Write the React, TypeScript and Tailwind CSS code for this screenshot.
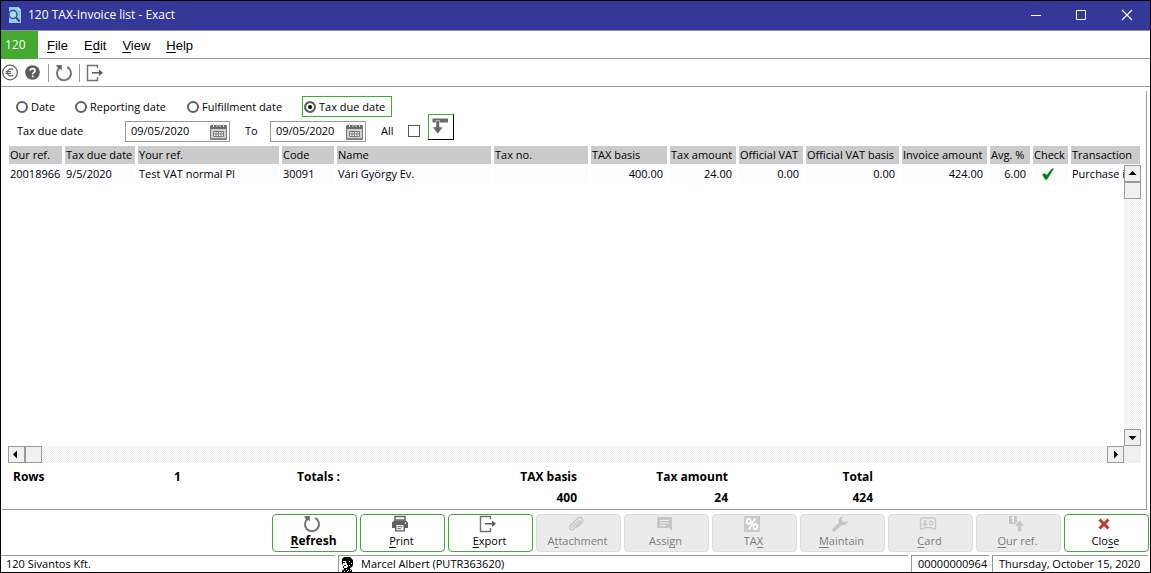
import type { ReactNode } from 'react';

interface Column {
  label: string;
  value: string;
  width: string;
  right?: boolean;
}

const COLUMNS: Column[] = [
  { label: 'Our ref.', value: '20018966', width: 'w-[56px]' },
  { label: 'Tax due date', value: '9/5/2020', width: 'w-[73px]' },
  { label: 'Your ref.', value: 'Test VAT normal PI', width: 'w-[144px]' },
  { label: 'Code', value: '30091', width: 'w-[55px]' },
  { label: 'Name', value: 'Vári György Ev.', width: '' },
  { label: 'Tax no.', value: '', width: 'w-[97px]' },
  { label: 'TAX basis', value: '400.00', width: 'w-[79px]', right: true },
  { label: 'Tax amount', value: '24.00', width: 'w-[69px]', right: true },
  { label: 'Official VAT', value: '0.00', width: 'w-[67px]', right: true },
  { label: 'Official VAT basis', value: '0.00', width: 'w-[96px]', right: true },
  { label: 'Invoice amount', value: '424.00', width: 'w-[88px]', right: true },
  { label: 'Avg. %', value: '6.00', width: 'w-[43px]', right: true },
  { label: 'Check', value: 'check', width: 'w-[38px]' },
  { label: 'Transaction', value: 'Purchase i', width: 'w-[72px]' },
];

const RADIOS = [
  { label: 'Date', box: 'w-[59px]' },
  { label: 'Reporting date', box: 'w-[112px]' },
  { label: 'Fulfillment date', box: 'w-[117px]' },
  { label: 'Tax due date', box: 'w-[90px]', checked: true },
];

function RefreshIcon() {
  return (
    <svg width="18" height="18" viewBox="0 0 18 18" aria-hidden="true">
      <path d="M12.2 3A7 7 0 1 1 4.8 3.6" fill="none" stroke="#757575" strokeWidth="2" />
      <path d="M1 1.2 6.8 1v5.6L4.8 4.6 3 4.2Z" fill="#666" />
    </svg>
  );
}

function ExportIcon() {
  return (
    <svg width="18" height="18" viewBox="0 0 18 18" aria-hidden="true">
      <path d="M11.5 4V1.5h-10v15h10V13" fill="none" stroke="#707070" strokeWidth="1.4" />
      <path d="M6 8h7V5.5L17 8.7 13 12V9.4H6Z" fill="#5c5c5c" />
    </svg>
  );
}

function PrintIcon() {
  return (
    <svg width="18" height="18" viewBox="0 0 18 18" aria-hidden="true">
      <path d="M4 1.5h10V5H4Z" fill="#fff" stroke="#666" strokeWidth="1.5" />
      <path d="M3 5.5h12l2 2V13h-3v3.5H4V13H1V7.5Z" fill="#616161" />
      <path d="M5.5 10h7v5.2h-7Z" fill="#fff" />
      <path d="M6.5 11.7h5M6.5 13.6h3.5" stroke="#616161" />
      <circle cx="14.5" cy="8" r="0.8" fill="#fff" />
    </svg>
  );
}

function ClipIcon() {
  return (
    <svg width="18" height="18" viewBox="0 0 18 18" fill="none" stroke="#c6c6c6" strokeWidth="1.4" aria-hidden="true">
      <path d="m4.8 12.6 6.4-6.4c1.4-1.4 3 .2 1.7 1.6l-6 6c-2.6 2.6-6-.6-3.4-3.3l6.7-6.7c3.6-3.5 7.8.5 4.3 4.1l-5.2 5.2" />
    </svg>
  );
}

function NoteIcon() {
  return (
    <svg width="18" height="18" viewBox="0 0 18 18" aria-hidden="true">
      <path d="M3.5 2h12A1.5 1.5 0 0 1 17 3.5V16l-3-3H3.5A1.5 1.5 0 0 1 2 11.5v-8A1.5 1.5 0 0 1 3.5 2Z" fill="#c6c6c6" />
      <path d="M5 5.5h9M5 8h9M5 10.5h6" stroke="#ebebeb" />
    </svg>
  );
}

function PercentIcon() {
  return (
    <svg width="18" height="18" viewBox="0 0 18 18" aria-hidden="true">
      <rect x="1" y="1" width="16" height="16" rx="1" fill="#c8c8c8" />
      <g fill="none" stroke="#fff" strokeWidth="1.9">
        <ellipse cx="5.7" cy="6.3" rx="2" ry="2.6" />
        <ellipse cx="12.4" cy="11.7" rx="2" ry="2.6" />
        <path d="m12.2 3.2-6.4 11.6" />
      </g>
    </svg>
  );
}

function WrenchIcon() {
  return (
    <svg width="18" height="18" viewBox="0 0 18 18" aria-hidden="true">
      <path
        d="M12 1.2a5 5 0 0 0-4.3 6.5l-6 6a1.7 1.7 0 0 0 2.6 2.6l6-6a5 5 0 0 0 6.5-4.8l-2.6 1.7-2.9-.6-.7-2.6Z"
        fill="#c6c6c6"
      />
    </svg>
  );
}

function CardIcon() {
  return (
    <svg width="18" height="18" viewBox="0 0 18 18" aria-hidden="true">
      <path d="M3 3h12a1.5 1.5 0 0 1 1.500 1.500v9.500h-3l-1-1.500h-7L4.500 14h-3V4.500A1.500 1.500 0 0 1 3 3Z" fill="none" stroke="#c8c8c8" strokeWidth="1.300" />
      <circle cx="6" cy="6.500" r="1.400" fill="#c8c8c8" />
      <path d="M3.500 10.500c0-3.200 5-3.200 5 0Z" fill="#c8c8c8" />
      <circle cx="12" cy="8" r="1.800" fill="none" stroke="#c8c8c8" strokeWidth="1.300" />
    </svg>
  );
}

function RefIcon() {
  return (
    <svg width="18" height="18" viewBox="0 0 18 18" aria-hidden="true">
      <path d="M2 1h8v6L8 9H2Z" fill="#c6c6c6" />
      <path d="m4.700 3.300 1.500-1v5.200" fill="none" stroke="#fff" strokeWidth="1.300" />
      <path d="m12.500 5 5 6h-3v5.500h-4V11h-3Z" fill="#c6c6c6" stroke="#ebebeb" strokeWidth="0.600" />
    </svg>
  );
}

function CloseIcon() {
  return (
    <svg width="18" height="18" viewBox="0 0 18 18" aria-hidden="true">
      <path d="m4.500 4.500 9 9m0-9-9 9" stroke="#c0392b" strokeWidth="3" />
    </svg>
  );
}

function PersonIcon() {
  return (
    <svg width="14" height="16" viewBox="0 0 14 16" aria-hidden="true">
      <path d="M2 3 4 1h6l3 3v5l-1 2-2 1v1l2 1v2H2v-1l2-2v-1H3V9L2 8Z" fill="#000" />
      <path d="M3 5h3v2h1v2h1v2H7v1H4v-2H3Z" fill="#fff" />
      <path d="M3 6h2v1H3zM4 9h2v1H4z" fill="#000" />
      <path d="M9 5h1v1H9zM11 7h1v1h-1zM9 9h1v1H9zM6 13h1v1H6zM8 14h1v1H8zM10 14h1v1h-1zM4 15h1v1H4zM7 15h1v1H7z" fill="#fff" />
    </svg>
  );
}

function CalendarIcon() {
  return (
    <svg width="17" height="17" viewBox="0 0 17 17" aria-hidden="true">
      <path d="M.5 2.500h16v14H.5Z" fill="#d2d2d2" stroke="#777" />
      <path d="M1 2h15v4H1Z" fill="#6b6b6b" />
      <path d="M3.500 0v4M7 0v4M10 0v4M13.500 0v4" stroke="#dedede" strokeWidth="1" />
      <path d="M3.500 8.500h10v5h-10ZM3.500 11h10M6 8.500v5M8.500 8.500v5M11 8.500v5" fill="#fff" stroke="#7b7b7b" />
      <path d="M1 15.500h15" stroke="#8b8b8b" />
    </svg>
  );
}

interface Action {
  before?: string;
  key: string;
  after: string;
  icon: ReactNode;
  disabled?: boolean;
  bold?: boolean;
}

const ACTIONS: Action[] = [
  { key: 'R', after: 'efresh', icon: <RefreshIcon />, bold: true },
  { key: 'P', after: 'rint', icon: <PrintIcon /> },
  { key: 'E', after: 'xport', icon: <ExportIcon /> },
  { before: 'A', key: 't', after: 'tachment', icon: <ClipIcon />, disabled: true },
  { before: 'Assi', key: 'g', after: 'n', icon: <NoteIcon />, disabled: true },
  { before: 'TA', key: 'X', after: '', icon: <PercentIcon />, disabled: true },
  { key: 'M', after: 'aintain', icon: <WrenchIcon />, disabled: true },
  { key: 'C', after: 'ard', icon: <CardIcon />, disabled: true },
  { key: 'O', after: 'ur ref.', icon: <RefIcon />, disabled: true },
  { before: 'Clo', key: 's', after: 'e', icon: <CloseIcon /> },
];

function ActionButton({ action }: { action: Action }) {
  const tone = action.disabled ? 'border-[#dcdcdc] bg-[#ebebeb] text-[#7c7c7c]' : 'border-[#43a936] bg-white text-black';
  return (
    <button
      type="button"
      disabled={action.disabled}
      className={`flex h-[38px] w-[85px] shrink-0 flex-col items-center rounded border pr-0.5 ${tone} ${action.bold ? 'text-[12px] font-bold' : ''}`}
    >
      <span className="-ml-1">{action.icon}</span>
      <span className="leading-4">
        {action.before}
        <u className="underline-offset-2">{action.key}</u>
        {action.after}
      </span>
    </button>
  );
}

function DateField({ label, width }: { label: string; width: string }) {
  return (
    <div className={`flex h-[21px] items-center border border-[#9a9a9a] bg-white pr-0.5 pl-[5px] ${width}`}>
      <input aria-label={label} type="text" defaultValue="09/05/2020" className="min-w-0 flex-1 outline-none" />
      <button type="button" aria-label={`Pick ${label}`}>
        <CalendarIcon />
      </button>
    </div>
  );
}

function ScrollButton({ points, label }: { points: string; label: string }) {
  return (
    <button type="button" aria-label={label} className="flex size-[17px] shrink-0 items-center justify-center border border-[#9a9a9a] bg-[#f0f0f0]">
      <svg width="9" height="9" viewBox="0 0 9 9" aria-hidden="true">
        <polygon points={points} fill="#000" />
      </svg>
    </button>
  );
}

export default function App() {
  return (
    <div className="flex min-h-screen flex-col border border-black bg-white font-['Open_Sans',sans-serif] text-[11px] leading-4 text-black">
      {/* title bar */}
      <header className="flex h-[30px] shrink-0 items-center border-b border-[#8f8f8f] bg-[#353799] pb-0.5 text-white">
        <svg className="ml-1.5" width="16" height="18" viewBox="0 0 16 18" aria-hidden="true">
          <path d="M2 1h9l3 3v13H2Z" fill="#8fcbf5" />
          <path d="m11 1 3 3h-3Z" fill="#d6efff" />
          <circle cx="6" cy="8.500" r="4" fill="#a9dafa" stroke="#3d5573" strokeWidth="1.500" />
          <path d="m9 11.500 3.500 4" stroke="#3d5573" strokeWidth="2" />
        </svg>
        <h1 className="ml-[5px] flex-1 text-[12px]">120 TAX-Invoice list - Exact</h1>
        <button type="button" aria-label="Minimize" className="flex w-[46px] justify-center">
          <svg width="12" height="12" viewBox="0 0 12 12"><path d="M1 6.500h10" stroke="#fff" /></svg>
        </button>
        <button type="button" aria-label="Maximize" className="flex w-11 justify-center">
          <svg width="12" height="12" viewBox="0 0 12 12"><path d="M1.500 1.500h9v9h-9Z" fill="none" stroke="#fff" /></svg>
        </button>
        <button type="button" aria-label="Close window" className="flex w-[47px] justify-center">
          <svg width="12" height="12" viewBox="0 0 12 12"><path d="m1 1 10 10m0-10L1 11" stroke="#fff" strokeWidth="1.200" /></svg>
        </button>
      </header>

      {/* menu */}
      <nav className="flex h-7 shrink-0">
        <span className="flex w-[37px] items-center bg-[#43a92f] pl-1 text-[12px] text-white">120</span>
        <div className="ml-px flex flex-1 items-center gap-4 border-b border-[#9a9a9a] pt-0.5 pl-2 font-['Liberation_Sans',sans-serif] text-[13px]">
          <button type="button"><u className="underline-offset-2">F</u>ile</button>
          <button type="button">E<u className="underline-offset-2">d</u>it</button>
          <button type="button"><u className="underline-offset-2">V</u>iew</button>
          <button type="button"><u className="underline-offset-2">H</u>elp</button>
        </div>
      </nav>

      {/* toolbar */}
      <div className="flex h-7 shrink-0 items-center border-b border-[#9a9a9a]">
        <button type="button" aria-label="Currency">
          <svg width="17" height="17" viewBox="0 0 17 17" aria-hidden="true">
            <circle cx="9" cy="8.500" r="7.300" fill="none" stroke="#666" strokeWidth="1.300" />
            <path d="M12 5.800a3.500 3.500 0 1 0 0 5.400M4.500 7.700H10M4.500 9.500H10" fill="none" stroke="#666" strokeWidth="1.200" />
          </svg>
        </button>
        <button type="button" aria-label="Help" className="ml-[7px]">
          <svg width="15" height="15" viewBox="0 0 15 15" aria-hidden="true">
            <circle cx="7.500" cy="7.500" r="7.300" fill="#5c5c5c" />
            <path d="M5.200 5.800c0-3 4.800-3 4.800 0 0 1.700-2.300 1.600-2.300 3.500M7.700 10.500v1.800" fill="none" stroke="#fff" strokeWidth="1.700" />
          </svg>
        </button>
        <span className="ml-2 h-[18px] w-px bg-[#9a9a9a]" />
        <button type="button" aria-label="Refresh list" className="ml-1.5"><RefreshIcon /></button>
        <span className="ml-1.5 h-[18px] w-px bg-[#9a9a9a]" />
        <button type="button" aria-label="Export list" className="ml-1.5"><ExportIcon /></button>
      </div>

      <main className="mt-1 mr-[3px] ml-px flex flex-1 flex-col border-r border-b border-[#9a9a9a]">
        <form className="pt-[5px] pb-px pl-3">
          <div className="flex">
            {RADIOS.map((r) => (
              <label
                key={r.label}
                className={`flex h-[21px] shrink-0 items-center gap-[3px] border pl-px whitespace-nowrap ${r.box} ${r.checked ? 'border-[#43a936]' : 'border-transparent'}`}
              >
                <input
                  type="radio"
                  name="basis"
                  defaultChecked={r.checked}
                  className="size-3 shrink-0 appearance-none rounded-full border-2 border-[#606060] checked:bg-black checked:shadow-[inset_0_0_0_2px_#fff]"
                />
                {r.label}
              </label>
            ))}
          </div>
          <div className="flex h-7 items-center">
            <span className="w-[111px] pl-[3px]">Tax due date</span>
            <DateField label="Tax due date from" width="w-[105px]" />
            <span className="w-10 pl-[15px]">To</span>
            <DateField label="Tax due date to" width="w-24" />
            <label className="ml-[15px] flex items-center gap-3.5">
              All
              <input type="checkbox" className="size-3 appearance-none border border-[#555] checked:bg-[#555]" />
            </label>
            <button
              type="button"
              aria-label="Apply filter"
              className="mb-2 ml-2 flex size-[26px] border border-t-[#43a936] border-r-black border-b-black border-l-[#43a936] pt-[3px] pl-[3px]"
            >
              <svg width="17" height="17" viewBox="0 0 17 17" aria-hidden="true">
                <path d="M.5.500h15.500v4H.5Z" fill="#6a6a6a" />
                <path d="M4 2.500h3.500V9H11l-5.200 7L.5 9H4Z" fill="#666" stroke="#fff" strokeWidth="0.500" />
              </svg>
            </button>
          </div>
        </form>

        <div className="mr-[5px] ml-1.5 grid flex-1 grid-cols-[1fr_17px] grid-rows-[19px_1fr_17px]">
          <div className="col-span-2 col-start-1 row-span-2 row-start-1 overflow-hidden pl-px">
            <table className="w-[calc(100%+2px)] table-fixed border-separate border-spacing-0 whitespace-nowrap">
              <thead>
                <tr>
                  {COLUMNS.map((c) => (
                    <th key={c.label} className={`h-[18px] border-r-[3px] border-white bg-[#cbcbcb] bg-clip-padding p-0 pl-px text-left font-normal ${c.width}`}>
                      {c.label}
                    </th>
                  ))}
                </tr>
              </thead>
              <tbody>
                <tr>
                  {COLUMNS.map((c) => (
                    <td
                      key={c.label}
                      className={`h-[19px] border-t border-r-[3px] border-white bg-[#fbfcff] bg-clip-padding p-0 ${c.right ? 'pr-1 text-right' : 'pl-px'}`}
                    >
                      {c.value === 'check' ? (
                        <svg className="ml-2" width="12" height="12" viewBox="0 0 12 12" role="img" aria-label="Checked">
                          <path d="M.5 6.500 3 5.500l1.500 2L10 .8h1.500L5 11.300H3.200Z" fill="#008000" stroke="#008000" strokeWidth="0.500" />
                        </svg>
                      ) : (
                        c.value
                      )}
                    </td>
                  ))}
                </tr>
              </tbody>
            </table>
          </div>
          <div className="z-10 col-start-2 row-start-2 flex flex-col bg-[repeating-conic-gradient(#fff_0_25%,#ebebeb_0_50%)] bg-[length:2px_2px]">
            <ScrollButton label="Scroll up" points="0.500,6 4.500,2 8.500,6" />
            <span className="h-[17px] border border-[#9a9a9a] bg-[#f0f0f0]" />
            <span className="flex-1" />
            <ScrollButton label="Scroll down" points="0.500,3 4.500,7 8.500,3" />
          </div>
          <div className="col-start-1 row-start-3 flex bg-[repeating-conic-gradient(#fff_0_25%,#ebebeb_0_50%)] bg-[length:2px_2px]">
            <ScrollButton label="Scroll left" points="5,0.500 1,4.500 5,8.500" />
            <span className="w-[17px] border border-[#9a9a9a] bg-[#f0f0f0]" />
            <span className="flex-1" />
            <ScrollButton label="Scroll right" points="3,0.500 7,4.500 3,8.500" />
          </div>
          <div className="col-start-2 row-start-3 bg-[#f0f0f0]" />
        </div>

        {/* totals */}
        <div className="flex h-[46px] shrink-0 pt-[3px] pl-[11px] text-[12px] leading-[21px] font-bold">
          <span className="w-[161px]">Rows</span>
          <span className="w-[123px]">1</span>
          <span className="w-[160px]">Totals :</span>
          <dl className="w-[120px] text-right">
            <dt>TAX basis</dt>
            <dd>400</dd>
          </dl>
          <dl className="w-[151px] text-right">
            <dt>Tax amount</dt>
            <dd>24</dd>
          </dl>
          <dl className="w-[145px] text-right">
            <dt>Total</dt>
            <dd>424</dd>
          </dl>
        </div>
      </main>

      <div className="mt-1 flex shrink-0 justify-end gap-[3px] pr-px">
        {ACTIONS.map((a) => (
          <ActionButton key={a.key} action={a} />
        ))}
      </div>

      {/* status bar */}
      <footer className="mt-[3px] flex h-[17px] shrink-0 gap-[3px] pr-0.5">
        <span className="w-[334px] border-t border-[#9a9a9a] pl-[5px]">120 Sivantos Kft.</span>
        <span className="flex flex-1 gap-[7px] border-t border-l border-[#9a9a9a] pl-px">
          <PersonIcon />
          Marcel Albert (PUTR363620)
        </span>
        <span className="w-[78px] border-t border-l border-[#9a9a9a] pl-1.5">00000000964</span>
        <span className="w-[156px] border-t border-l border-[#9a9a9a] pl-1.5">Thursday, October 15, 2020</span>
      </footer>
    </div>
  );
}
